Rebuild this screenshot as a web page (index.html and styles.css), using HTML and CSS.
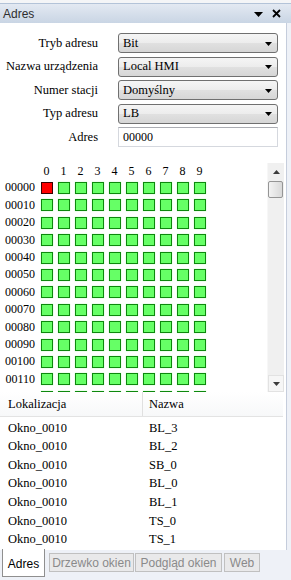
FILE: index.html
```html
<!DOCTYPE html>
<html>
<head>
<meta charset="utf-8">
<link rel="stylesheet" href="styles.css">
</head>
<body>
<div class="panel">
  <div class="topstrip"></div>
  <div class="titlebar">
    <span class="title">Adres</span>
    <span class="tb-icons">
      <svg class="tb-menu" width="9" height="5" viewBox="0 0 9 5"><path d="M0 0H9L4.5 5Z" fill="#000"/></svg>
      <svg class="tb-close" width="9" height="9" viewBox="0 0 9 9"><path d="M1 1L8 8M8 1L1 8" stroke="#000" stroke-width="1.8"/></svg>
    </span>
  </div>
  <div class="content">
    <div class="form">
      <div class="frow"><span class="flabel">Tryb adresu</span><div class="combo"><span>Bit</span><svg class="carrow" width="7" height="4" viewBox="0 0 7 4"><path d="M0 0H7L3.5 4Z" fill="#000"/></svg></div></div>
      <div class="frow"><span class="flabel">Nazwa urządzenia</span><div class="combo"><span>Local HMI</span><svg class="carrow" width="7" height="4" viewBox="0 0 7 4"><path d="M0 0H7L3.5 4Z" fill="#000"/></svg></div></div>
      <div class="frow"><span class="flabel">Numer stacji</span><div class="combo"><span>Domyślny</span><svg class="carrow" width="7" height="4" viewBox="0 0 7 4"><path d="M0 0H7L3.5 4Z" fill="#000"/></svg></div></div>
      <div class="frow"><span class="flabel">Typ adresu</span><div class="combo"><span>LB</span><svg class="carrow" width="7" height="4" viewBox="0 0 7 4"><path d="M0 0H7L3.5 4Z" fill="#000"/></svg></div></div>
      <div class="frow"><span class="flabel">Adres</span><div class="tinput">00000</div></div>
    </div>

    <div class="bits">
      <div class="bitgrid">
        <div class="hdr"><span class="rl"></span><span class="hc">0</span><span class="hc">1</span><span class="hc">2</span><span class="hc">3</span><span class="hc">4</span><span class="hc">5</span><span class="hc">6</span><span class="hc">7</span><span class="hc">8</span><span class="hc">9</span></div>
        <div class="brow"><span class="rl">00000</span><span class="cw"><i class="c red"></i></span><span class="cw"><i class="c"></i></span><span class="cw"><i class="c"></i></span><span class="cw"><i class="c"></i></span><span class="cw"><i class="c"></i></span><span class="cw"><i class="c"></i></span><span class="cw"><i class="c"></i></span><span class="cw"><i class="c"></i></span><span class="cw"><i class="c"></i></span><span class="cw"><i class="c"></i></span></div>
        <div class="brow"><span class="rl">00010</span><span class="cw"><i class="c"></i></span><span class="cw"><i class="c"></i></span><span class="cw"><i class="c"></i></span><span class="cw"><i class="c"></i></span><span class="cw"><i class="c"></i></span><span class="cw"><i class="c"></i></span><span class="cw"><i class="c"></i></span><span class="cw"><i class="c"></i></span><span class="cw"><i class="c"></i></span><span class="cw"><i class="c"></i></span></div>
        <div class="brow"><span class="rl">00020</span><span class="cw"><i class="c"></i></span><span class="cw"><i class="c"></i></span><span class="cw"><i class="c"></i></span><span class="cw"><i class="c"></i></span><span class="cw"><i class="c"></i></span><span class="cw"><i class="c"></i></span><span class="cw"><i class="c"></i></span><span class="cw"><i class="c"></i></span><span class="cw"><i class="c"></i></span><span class="cw"><i class="c"></i></span></div>
        <div class="brow"><span class="rl">00030</span><span class="cw"><i class="c"></i></span><span class="cw"><i class="c"></i></span><span class="cw"><i class="c"></i></span><span class="cw"><i class="c"></i></span><span class="cw"><i class="c"></i></span><span class="cw"><i class="c"></i></span><span class="cw"><i class="c"></i></span><span class="cw"><i class="c"></i></span><span class="cw"><i class="c"></i></span><span class="cw"><i class="c"></i></span></div>
        <div class="brow"><span class="rl">00040</span><span class="cw"><i class="c"></i></span><span class="cw"><i class="c"></i></span><span class="cw"><i class="c"></i></span><span class="cw"><i class="c"></i></span><span class="cw"><i class="c"></i></span><span class="cw"><i class="c"></i></span><span class="cw"><i class="c"></i></span><span class="cw"><i class="c"></i></span><span class="cw"><i class="c"></i></span><span class="cw"><i class="c"></i></span></div>
        <div class="brow"><span class="rl">00050</span><span class="cw"><i class="c"></i></span><span class="cw"><i class="c"></i></span><span class="cw"><i class="c"></i></span><span class="cw"><i class="c"></i></span><span class="cw"><i class="c"></i></span><span class="cw"><i class="c"></i></span><span class="cw"><i class="c"></i></span><span class="cw"><i class="c"></i></span><span class="cw"><i class="c"></i></span><span class="cw"><i class="c"></i></span></div>
        <div class="brow"><span class="rl">00060</span><span class="cw"><i class="c"></i></span><span class="cw"><i class="c"></i></span><span class="cw"><i class="c"></i></span><span class="cw"><i class="c"></i></span><span class="cw"><i class="c"></i></span><span class="cw"><i class="c"></i></span><span class="cw"><i class="c"></i></span><span class="cw"><i class="c"></i></span><span class="cw"><i class="c"></i></span><span class="cw"><i class="c"></i></span></div>
        <div class="brow"><span class="rl">00070</span><span class="cw"><i class="c"></i></span><span class="cw"><i class="c"></i></span><span class="cw"><i class="c"></i></span><span class="cw"><i class="c"></i></span><span class="cw"><i class="c"></i></span><span class="cw"><i class="c"></i></span><span class="cw"><i class="c"></i></span><span class="cw"><i class="c"></i></span><span class="cw"><i class="c"></i></span><span class="cw"><i class="c"></i></span></div>
        <div class="brow"><span class="rl">00080</span><span class="cw"><i class="c"></i></span><span class="cw"><i class="c"></i></span><span class="cw"><i class="c"></i></span><span class="cw"><i class="c"></i></span><span class="cw"><i class="c"></i></span><span class="cw"><i class="c"></i></span><span class="cw"><i class="c"></i></span><span class="cw"><i class="c"></i></span><span class="cw"><i class="c"></i></span><span class="cw"><i class="c"></i></span></div>
        <div class="brow"><span class="rl">00090</span><span class="cw"><i class="c"></i></span><span class="cw"><i class="c"></i></span><span class="cw"><i class="c"></i></span><span class="cw"><i class="c"></i></span><span class="cw"><i class="c"></i></span><span class="cw"><i class="c"></i></span><span class="cw"><i class="c"></i></span><span class="cw"><i class="c"></i></span><span class="cw"><i class="c"></i></span><span class="cw"><i class="c"></i></span></div>
        <div class="brow"><span class="rl">00100</span><span class="cw"><i class="c"></i></span><span class="cw"><i class="c"></i></span><span class="cw"><i class="c"></i></span><span class="cw"><i class="c"></i></span><span class="cw"><i class="c"></i></span><span class="cw"><i class="c"></i></span><span class="cw"><i class="c"></i></span><span class="cw"><i class="c"></i></span><span class="cw"><i class="c"></i></span><span class="cw"><i class="c"></i></span></div>
        <div class="brow"><span class="rl">00110</span><span class="cw"><i class="c"></i></span><span class="cw"><i class="c"></i></span><span class="cw"><i class="c"></i></span><span class="cw"><i class="c"></i></span><span class="cw"><i class="c"></i></span><span class="cw"><i class="c"></i></span><span class="cw"><i class="c"></i></span><span class="cw"><i class="c"></i></span><span class="cw"><i class="c"></i></span><span class="cw"><i class="c"></i></span></div>
        <div class="brow"><span class="rl">00120</span><span class="cw"><i class="c"></i></span><span class="cw"><i class="c"></i></span><span class="cw"><i class="c"></i></span><span class="cw"><i class="c"></i></span><span class="cw"><i class="c"></i></span><span class="cw"><i class="c"></i></span><span class="cw"><i class="c"></i></span><span class="cw"><i class="c"></i></span><span class="cw"><i class="c"></i></span><span class="cw"><i class="c"></i></span></div>
      </div>
      <div class="vscroll">
        <div class="sbtn"><svg width="7" height="4" viewBox="0 0 7 4"><path d="M0 4H7L3.5 0Z" fill="#3c3c3c"/></svg></div>
        <div class="thumb"></div>
        <div class="track"></div>
        <div class="sbtn sbtn-down"><svg width="7" height="4" viewBox="0 0 7 4"><path d="M0 0H7L3.5 4Z" fill="#3c3c3c"/></svg></div>
      </div>
    </div>

    <div class="table">
      <div class="thead"><span class="col1">Lokalizacja</span><span class="col2">Nazwa</span></div>
      <div class="tbody">
        <div class="trow"><span class="col1">Okno_0010</span><span class="col2">BL_3</span></div>
        <div class="trow"><span class="col1">Okno_0010</span><span class="col2">BL_2</span></div>
        <div class="trow"><span class="col1">Okno_0010</span><span class="col2">SB_0</span></div>
        <div class="trow"><span class="col1">Okno_0010</span><span class="col2">BL_0</span></div>
        <div class="trow"><span class="col1">Okno_0010</span><span class="col2">BL_1</span></div>
        <div class="trow"><span class="col1">Okno_0010</span><span class="col2">TS_0</span></div>
        <div class="trow"><span class="col1">Okno_0010</span><span class="col2">TS_1</span></div>
      </div>
    </div>
  </div>
  <div class="tabs">
    <span class="tab active">Adres</span>
    <span class="tab t-drzewko">Drzewko okien</span>
    <span class="tab t-podglad">Podgląd okien</span>
    <span class="tab t-web">Web</span>
  </div>
</div>
</body>
</html>
```
FILE: styles.css
```css
html, body {
  margin: 0;
  padding: 0;
}
body {
  width: 291px;
  height: 580px;
  overflow: hidden;
  background: #eef1f7;
  font-family: "Liberation Serif", "Times New Roman", serif;
  color: #000;
}
.panel {
  display: flex;
  flex-direction: column;
  height: 580px;
}
.topstrip {
  height: 3px;
  background: #f4f5f7;
}
.titlebar {
  height: 19px;
  border-top: 1px solid #b3c3d8;
  background: linear-gradient(#e3e9f2, #c9d5e4);
  display: flex;
  align-items: center;
  justify-content: space-between;
  padding: 0 10px 0 3px;
  font-family: "Liberation Sans", Arial, sans-serif;
  font-size: 12px;
  color: #2e2e2e;
}
.tb-icons {
  display: flex;
  align-items: center;
  gap: 9px;
}
.tb-menu { margin-top: 2px; }

.content {
  width: 286px;
  height: 527px;
  background: #fff;
  border-right: 1px solid #c5cddc;
  overflow: hidden;
  display: flex;
  flex-direction: column;
}

/* form */
.form {
  padding-top: 10px;
  display: flex;
  flex-direction: column;
  gap: 3.5px;
}
.frow {
  display: flex;
  align-items: center;
  height: 20px;
}
.flabel {
  width: 98px;
  text-align: right;
  font-size: 12.5px;
  margin-right: 20px;
  white-space: nowrap;
}
.combo {
  box-sizing: border-box;
  width: 160px;
  height: 20px;
  border: 1px solid #707070;
  border-radius: 3px;
  background: linear-gradient(#f5f5f5 0%, #ececec 50%, #e0e0e0 52%, #d6d6d6 100%);
  display: flex;
  align-items: center;
  justify-content: space-between;
  padding: 0 5px 0 4px;
  font-size: 12.5px;
}
.carrow { margin-top: 1px; }
.tinput {
  box-sizing: border-box;
  width: 160px;
  height: 20px;
  border: 1px solid #d5d8de;
  border-top-color: #abadb3;
  padding: 0 4px;
  font-size: 12px;
  line-height: 18px;
}

/* bits */
.bits {
  margin-top: 16px;
  height: 229px;
  display: flex;
}
.bitgrid {
  flex: 1;
  overflow: hidden;
}
.hdr, .brow {
  display: flex;
  align-items: center;
}
.hdr {
  height: 16.3px;
  font-size: 12px;
}
.brow {
  height: 17.4px;
  font-size: 12px;
}
.rl {
  width: 35px;
  padding-right: 3px;
  text-align: right;
  flex: none;
}
.hc, .cw {
  width: 17px;
  flex: none;
  text-align: center;
  display: flex;
  justify-content: center;
}
.c {
  display: block;
  width: 12px;
  height: 12px;
  box-sizing: border-box;
  border: 1.5px solid #0d880d;
  background: #66ff66;
  box-shadow: 0 0 1px #9dff9d;
}
.c.red {
  background: #ff0000;
  border-color: #3a0000;
  box-shadow: none;
}
.vscroll {
  width: 17px;
  margin-right: 2px;
  background: #f0f0f0;
  border-left: 1px solid #f7f7f7;
  box-sizing: border-box;
  display: flex;
  flex-direction: column;
}
.sbtn {
  height: 17px;
  display: flex;
  align-items: center;
  justify-content: center;
}
.sbtn-down {
  border: 1px solid #e2e2e2;
  background: #f6f6f6;
  box-sizing: border-box;
}
.thumb {
  height: 15px;
  margin: 1px 1px 0 0;
  border: 1px solid #959595;
  border-radius: 2px;
  background: linear-gradient(90deg, #f3f3f3, #e6e6e6 50%, #d9d9d9);
}
.track { flex: 1; }

/* table */
.table {
  font-size: 12.5px;
}
.thead {
  height: 24px;
  display: flex;
  align-items: center;
  border-bottom: 1px solid #e3e3e3;
  background: linear-gradient(#ffffff, #f7f8f9);
  margin-right: 3px;
}
.thead .col1 {
  width: 134px;
  height: 24px;
  line-height: 24px;
  padding-left: 8px;
  border-right: 1px solid #e0e0e0;
}
.thead .col2 {
  padding-left: 6px;
}
.tbody {
  padding-top: 1.7px;
}
.trow {
  height: 18.67px;
  display: flex;
  align-items: center;
}
.trow .col1 {
  width: 141px;
  padding-left: 8px;
}

/* tabs */
.tabs {
  height: 30px;
  display: flex;
  align-items: flex-start;
  padding-left: 2px;
  font-family: "Liberation Sans", Arial, sans-serif;
  font-size: 12px;
}
.tab {
  box-sizing: border-box;
  display: flex;
  align-items: center;
  justify-content: center;
  height: 19px;
  margin-top: 3px;
  background: #e9e9ea;
  border: 1px solid #c0c0c0;
  color: #8a8a8a;
  white-space: nowrap;
}
.tab.active {
  width: 43px;
  height: 28px;
  margin-top: -1px;
  background: #fff;
  border: 1px solid #8f8f8f;
  border-top: none;
  color: #000;
  padding-top: 3px;
  margin-right: 4px;
}
.t-drzewko { width: 85px; }
.t-podglad { width: 87px; margin-left: 1px; }
.t-web { width: 36px; margin-left: 2px; }
```
